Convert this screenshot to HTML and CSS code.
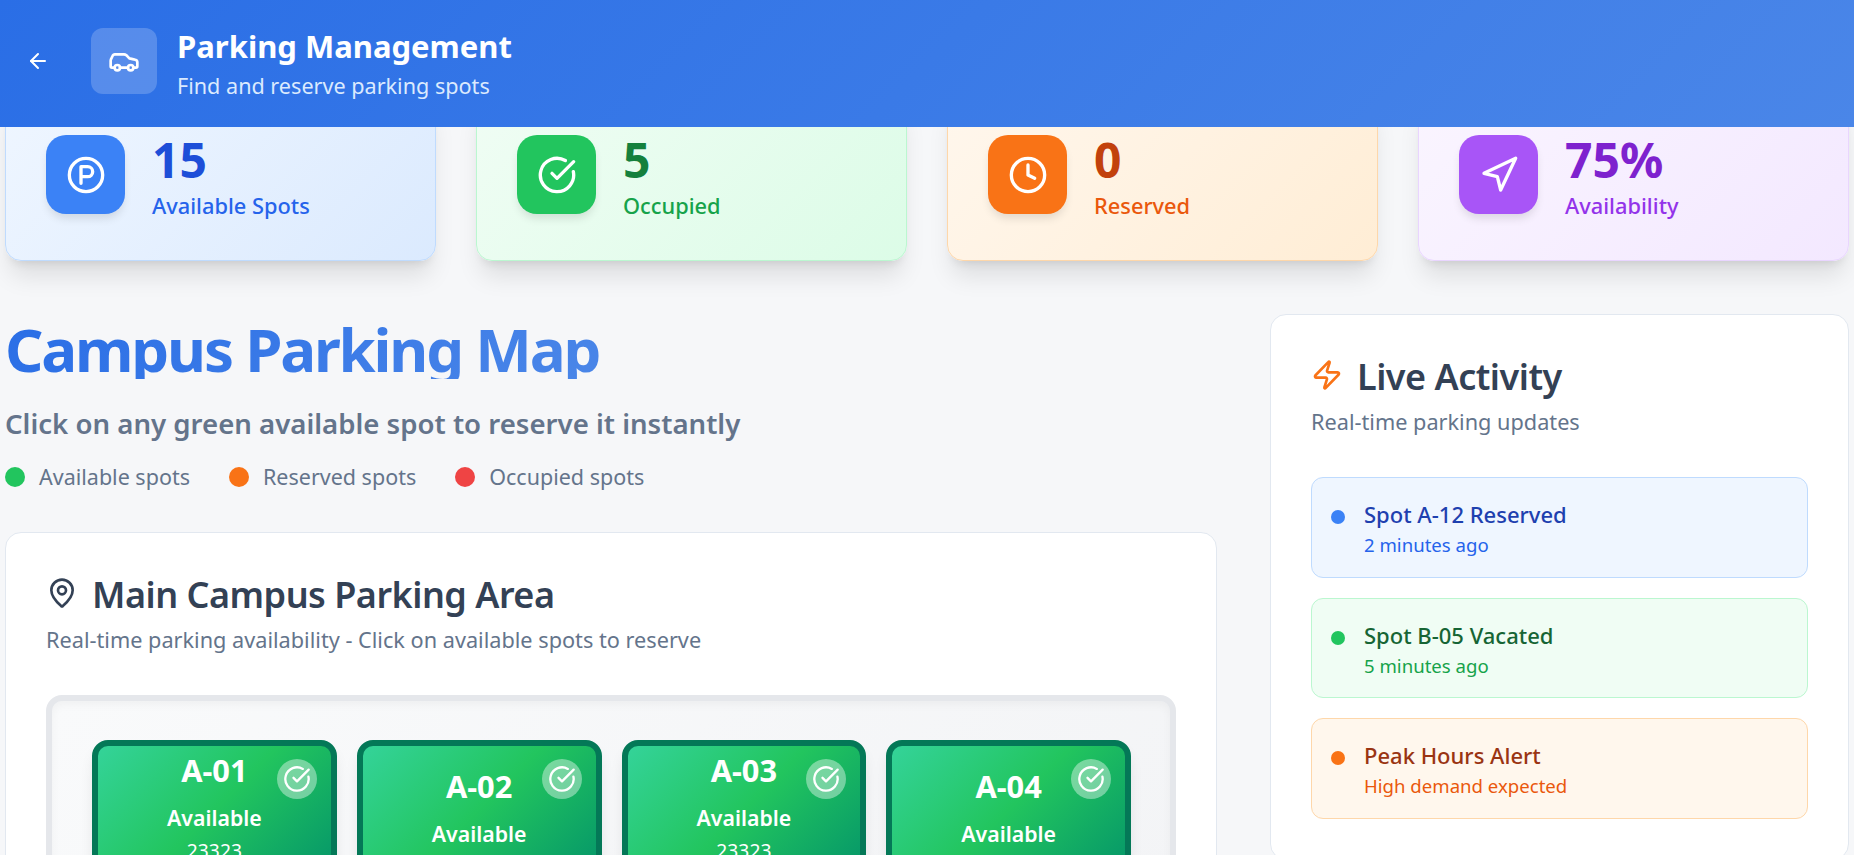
FILE: index.html
```html
<!DOCTYPE html>
<html lang="en">
<head>
    <meta charset="UTF-8">
    <meta name="viewport" content="width=device-width, initial-scale=1.0">
    <title>Parking Management</title>
    <link rel="stylesheet" href="styles.css">
</head>
<body>

<svg class="sprite" aria-hidden="true">
    <symbol id="check" viewBox="0 0 24 24"><path d="M21.801 10A10 10 0 1 1 17 3.335"/><path d="m9 11 3 3L22 4"/></symbol>
</svg>

<!-- Header -->
<header class="topbar">
    <button class="back" type="button" aria-label="Back">
        <svg class="icon icon-24" viewBox="0 0 24 24"><path d="m12 19-7-7 7-7"/><path d="M19 12H5"/></svg>
    </button>
    <div class="topbar-icon">
        <svg class="icon icon-32" viewBox="0 0 24 24"><path d="M19 17h2c.6 0 1-.4 1-1v-3c0-.9-.7-1.7-1.5-1.9C18.7 10.6 16 10 16 10s-1.3-1.4-2.2-2.3c-.5-.4-1.1-.7-1.8-.7H5c-.6 0-1.1.4-1.4.9l-1.4 2.9A3.7 3.7 0 0 0 2 12v4c0 .6.4 1 1 1h2"/><circle cx="7" cy="17" r="2"/><path d="M9 17h6"/><circle cx="17" cy="17" r="2"/></svg>
    </div>
    <div class="topbar-text">
        <h1 class="topbar-title">Parking Management</h1>
        <p class="topbar-sub">Find and reserve parking spots</p>
    </div>
</header>

<main class="page">

    <!-- Stats -->
    <section class="stats">
        <div class="stat stat-blue">
            <div class="stat-icon">
                <svg class="icon icon-40" viewBox="0 0 24 24"><circle cx="12" cy="12" r="10"/><path d="M9 17V7h4a3 3 0 0 1 0 6H9"/></svg>
            </div>
            <div>
                <p class="stat-num">15</p>
                <p class="stat-label">Available Spots</p>
            </div>
        </div>
        <div class="stat stat-green">
            <div class="stat-icon">
                <svg class="icon icon-40"><use href="#check"/></svg>
            </div>
            <div>
                <p class="stat-num">5</p>
                <p class="stat-label">Occupied</p>
            </div>
        </div>
        <div class="stat stat-orange">
            <div class="stat-icon">
                <svg class="icon icon-40" viewBox="0 0 24 24"><circle cx="12" cy="12" r="10"/><polyline points="12 6 12 12 16 14"/></svg>
            </div>
            <div>
                <p class="stat-num">0</p>
                <p class="stat-label">Reserved</p>
            </div>
        </div>
        <div class="stat stat-purple">
            <div class="stat-icon">
                <svg class="icon icon-40" viewBox="0 0 24 24"><polygon points="3 11 22 2 13 21 11 13 3 11"/></svg>
            </div>
            <div>
                <p class="stat-num">75%</p>
                <p class="stat-label">Availability</p>
            </div>
        </div>
    </section>

    <section class="columns">
        <div>
            <h2 class="map-title">Campus Parking Map</h2>
            <p class="map-lead">Click on any green available spot to reserve it instantly</p>
            <div class="legend">
                <span class="legend-item"><i class="dot dot-green"></i>Available spots</span>
                <span class="legend-item"><i class="dot dot-orange"></i>Reserved spots</span>
                <span class="legend-item"><i class="dot dot-red"></i>Occupied spots</span>
            </div>

            <div class="panel">
                <h3 class="panel-title">
                    <svg class="icon icon-32 pin" viewBox="0 0 24 24"><path d="M20 10c0 4.993-5.539 10.193-7.399 11.799a1 1 0 0 1-1.202 0C9.539 20.193 4 14.993 4 10a8 8 0 0 1 16 0"/><circle cx="12" cy="10" r="3"/></svg>
                    Main Campus Parking Area
                </h3>
                <p class="panel-sub">Real-time parking availability - Click on available spots to reserve</p>

                <div class="lot">
                    <div class="spot">
                        <span class="spot-check"><svg class="icon icon-28"><use href="#check"/></svg></span>
                        <p class="spot-name">A-01</p>
                        <p class="spot-state">Available</p>
                        <p class="spot-code">23323</p>
                    </div>
                    <div class="spot">
                        <span class="spot-check"><svg class="icon icon-28"><use href="#check"/></svg></span>
                        <p class="spot-name">A-02</p>
                        <p class="spot-state">Available</p>
                    </div>
                    <div class="spot">
                        <span class="spot-check"><svg class="icon icon-28"><use href="#check"/></svg></span>
                        <p class="spot-name">A-03</p>
                        <p class="spot-state">Available</p>
                        <p class="spot-code">23323</p>
                    </div>
                    <div class="spot">
                        <span class="spot-check"><svg class="icon icon-28"><use href="#check"/></svg></span>
                        <p class="spot-name">A-04</p>
                        <p class="spot-state">Available</p>
                    </div>
                </div>
            </div>
        </div>

        <!-- Activity -->
        <aside class="panel activity">
            <h3 class="panel-title">
                <svg class="icon icon-32 bolt" viewBox="0 0 24 24"><path d="M4 14a1 1 0 0 1-.78-1.63l9.9-10.2a.5.5 0 0 1 .86.46l-1.92 6.02A1 1 0 0 0 13 10h7a1 1 0 0 1 .78 1.63l-9.9 10.2a.5.5 0 0 1-.86-.46l1.92-6.02A1 1 0 0 0 11 14z"/></svg>
                Live Activity
            </h3>
            <p class="panel-sub">Real-time parking updates</p>

            <div class="feed">
                <div class="feed-item feed-blue">
                    <i class="feed-dot"></i>
                    <div>
                        <p class="feed-title">Spot A-12 Reserved</p>
                        <p class="feed-time">2 minutes ago</p>
                    </div>
                </div>
                <div class="feed-item feed-green">
                    <i class="feed-dot"></i>
                    <div>
                        <p class="feed-title">Spot B-05 Vacated</p>
                        <p class="feed-time">5 minutes ago</p>
                    </div>
                </div>
                <div class="feed-item feed-orange">
                    <i class="feed-dot"></i>
                    <div>
                        <p class="feed-title">Peak Hours Alert</p>
                        <p class="feed-time">High demand expected</p>
                    </div>
                </div>
            </div>
        </aside>
    </section>
</main>

</body>
</html>
```

FILE: styles.css
```css
html, body {
    height: 100%;
    overflow: hidden;
}
body {
    font-family: "Noto Sans", "Open Sans", sans-serif;
    margin: 0;
    background-color: #f6f7f9;
    color: #334155;
}
h1, h2, h3, p {
    margin: 0;
}
.sprite {
    display: none;
}
.icon {
    display: block;
    flex: none;
    fill: none;
    stroke: currentColor;
    stroke-width: 2;
    stroke-linecap: round;
    stroke-linejoin: round;
}
.icon-24 { width: 24px; height: 24px; }
.icon-28 { width: 28px; height: 28px; }
.icon-32 { width: 32px; height: 32px; }
.icon-40 { width: 40px; height: 40px; }

/* Header */
.topbar {
    position: relative;
    z-index: 10;
    display: flex;
    align-items: center;
    height: 127px;
    padding: 0 0 5px 26px;
    background: linear-gradient(135deg, #2a6ee6, #4a86e8);
    color: #fff;
    box-sizing: border-box;
}
.back {
    padding: 0;
    margin-right: 41px;
    border: none;
    background: none;
    color: #fff;
}
.topbar-icon {
    display: flex;
    align-items: center;
    justify-content: center;
    width: 66px;
    height: 66px;
    margin-right: 20px;
    border-radius: 12px;
    background: rgba(255, 255, 255, 0.2);
}
.topbar-text {
    padding-top: 8px;
}
.topbar-title {
    font-size: 31px;
    font-weight: 700;
    line-height: 36px;
}
.topbar-sub {
    margin-top: 6px;
    font-size: 21.6px;
    line-height: 32px;
    color: #dbeafe;
}

/* Stats */
.page {
    margin-top: -33px;
    padding: 0 5px;
}
.stats {
    display: grid;
    grid-template-columns: repeat(4, 1fr);
    gap: 40px;
}
.stat {
    display: flex;
    gap: 27px;
    height: 167px;
    padding: 40px;
    box-sizing: border-box;
    border: 1px solid;
    border-radius: 16px;
    box-shadow: 0 20px 25px -5px rgba(0, 0, 0, 0.1), 0 8px 10px -6px rgba(0, 0, 0, 0.1);
}
.stat-icon {
    display: flex;
    align-items: center;
    justify-content: center;
    width: 79px;
    height: 79px;
    border-radius: 20px;
    color: #fff;
    box-shadow: 0 6px 10px -2px rgba(0, 0, 0, 0.12);
}
.stat-num {
    font-size: 48px;
    font-weight: 700;
    line-height: 49px;
}
.stat-label {
    margin-top: 7px;
    font-size: 21.8px;
    font-weight: 500;
    line-height: 30px;
}
.stat-blue { background: linear-gradient(135deg, #eff6ff, #dbeafe); border-color: #bfdbfe; }
.stat-blue .stat-icon { background: #3b82f6; }
.stat-blue .stat-num { color: #1d4ed8; }
.stat-blue .stat-label { color: #2563eb; }
.stat-green { background: linear-gradient(135deg, #f0fdf4, #dcfce7); border-color: #bbf7d0; }
.stat-green .stat-icon { background: #22c55e; }
.stat-green .stat-num { color: #15803d; }
.stat-green .stat-label { color: #16a34a; }
.stat-orange { background: linear-gradient(135deg, #fff7ed, #ffedd5); border-color: #fed7aa; }
.stat-orange .stat-icon { background: #f97316; }
.stat-orange .stat-num { color: #c2410c; }
.stat-orange .stat-label { color: #ea580c; }
.stat-purple { background: linear-gradient(135deg, #faf5ff, #f3e8ff); border-color: #e9d5ff; }
.stat-purple .stat-icon { background: #a855f7; }
.stat-purple .stat-num { color: #7e22ce; }
.stat-purple .stat-label { color: #9333ea; }

/* Columns */
.columns {
    display: grid;
    grid-template-columns: 1212px 1fr;
    gap: 53px;
    margin-top: 53px;
}
.map-title {
    width: fit-content;
    margin-top: 5px;
    font-size: 60px;
    font-weight: 700;
    line-height: 60px;
    letter-spacing: -2.2px;
    background: linear-gradient(135deg, #2a6ee6, #4a86e8);
    -webkit-background-clip: text;
    background-clip: text;
    color: transparent;
}
.map-lead {
    margin-top: 26px;
    font-size: 27.6px;
    font-weight: 600;
    line-height: 36px;
    color: #64748b;
}
.legend {
    display: flex;
    gap: 39px;
    margin-top: 21px;
    font-size: 21.5px;
    line-height: 30px;
    color: #64748b;
}
.legend-item {
    display: flex;
    align-items: center;
    gap: 14px;
}
.dot {
    width: 20px;
    height: 20px;
    border-radius: 50%;
}
.dot-green { background: #22c55e; }
.dot-orange { background: #f97316; }
.dot-red { background: #ef4444; }

/* Panels */
.panel {
    margin-top: 40px;
    padding: 40px;
    background: #fff;
    border: 1px solid #e2e8f0;
    border-radius: 16px;
}
.activity {
    align-self: start;
    margin-top: 0;
}
.panel-title {
    display: flex;
    align-items: center;
    gap: 14px;
    font-size: 36px;
    font-weight: 600;
    line-height: 44px;
    letter-spacing: -0.5px;
    color: #334155;
}
.pin { color: #334155; margin-top: -4px; }
.bolt { color: #f97316; margin-top: -5px; }
.panel-sub {
    margin-top: 8px;
    font-size: 21.7px;
    line-height: 30px;
    color: #64748b;
}

/* Parking lot */
.lot {
    display: grid;
    grid-template-columns: repeat(4, 1fr);
    gap: 20px;
    margin-top: 40px;
    padding: 39px 39px 39px 40px;
    border: 6px solid #e5e7eb;
    border-radius: 16px;
    background: linear-gradient(135deg, #f9fafb, #f3f4f6);
    box-shadow: inset 0 4px 8px rgba(0, 0, 0, 0.04);
}
.spot {
    position: relative;
    display: flex;
    flex-direction: column;
    align-items: center;
    justify-content: center;
    height: 140px;
    padding-bottom: 6px;
    box-sizing: border-box;
    border: 6px solid #047857;
    border-radius: 16px;
    background: linear-gradient(135deg, #34d399, #22c55e 50%, #059669);
    color: #fff;
    box-shadow: 0 10px 15px -3px rgba(0, 0, 0, 0.1);
}
.spot-check {
    position: absolute;
    top: 13px;
    right: 14px;
    display: flex;
    align-items: center;
    justify-content: center;
    width: 40px;
    height: 40px;
    border-radius: 50%;
    background: rgba(255, 255, 255, 0.4);
}
.spot-name {
    font-size: 30.8px;
    font-weight: 700;
    line-height: 40px;
}
.spot-state {
    margin-top: 14px;
    font-size: 21.3px;
    font-weight: 600;
    line-height: 28px;
}
.spot-code {
    margin-top: 6px;
    font-size: 19.3px;
    line-height: 26px;
}

/* Activity feed */
.feed {
    display: flex;
    flex-direction: column;
    gap: 20px;
    margin-top: 40px;
}
.feed-item {
    display: flex;
    align-items: flex-start;
    gap: 19px;
    padding: 20px 20px 18.6px 19px;
    border: 1px solid;
    border-radius: 12px;
}
.feed-dot {
    flex: none;
    width: 14px;
    height: 14px;
    margin-top: 12px;
    border-radius: 50%;
}
.feed-title {
    font-size: 22px;
    font-weight: 500;
    line-height: 33px;
}
.feed-time {
    font-size: 18.6px;
    line-height: 27px;
}
.feed-blue { background: #eff6ff; border-color: #bfdbfe; }
.feed-blue .feed-dot { background: #3b82f6; }
.feed-blue .feed-title { color: #1e40af; }
.feed-blue .feed-time { color: #2563eb; }
.feed-green { background: #f0fdf4; border-color: #bbf7d0; }
.feed-green .feed-dot { background: #22c55e; }
.feed-green .feed-title { color: #166534; }
.feed-green .feed-time { color: #16a34a; }
.feed-orange { background: #fff7ed; border-color: #fed7aa; }
.feed-orange .feed-dot { background: #f97316; }
.feed-orange .feed-title { color: #9a3412; }
.feed-orange .feed-time { color: #ea580c; }
```
